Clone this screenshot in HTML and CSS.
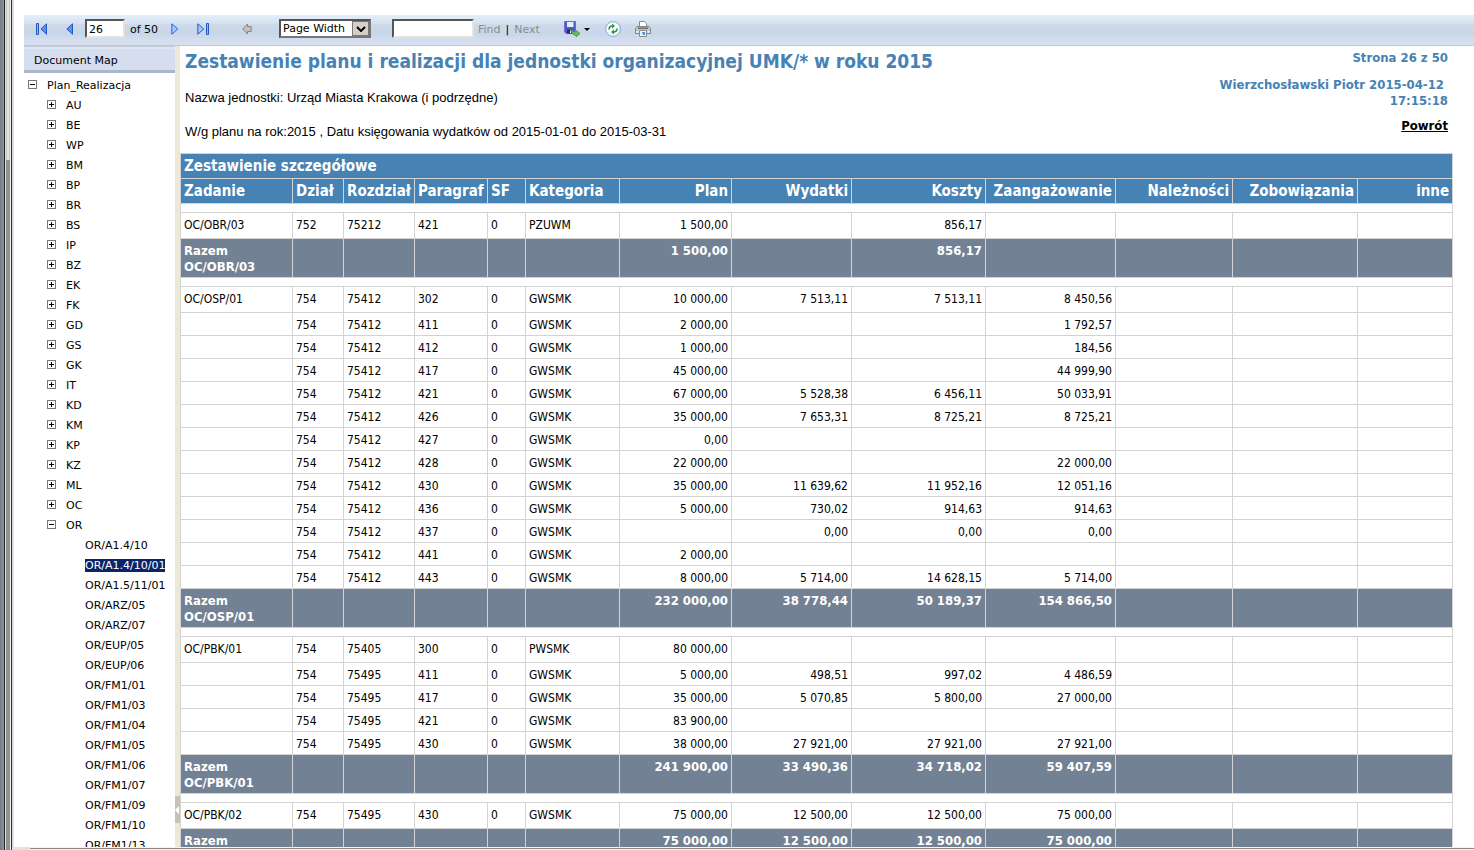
FILE: index.html
```html
<!DOCTYPE html>
<html lang="pl">
<head>
<meta charset="utf-8">
<title>Zestawienie planu i realizacji</title>
<link rel="stylesheet" href="styles.css">
</head>
<body>
<div class="frame"></div>
<div class="window">
<div class="viewer">
<div class="toolbar">
<button class="tool first" aria-label="First page"><svg width="12" height="12" viewBox="0 0 12 12"><path d="M.5.5h2v11h-2z" fill="#8db5f5" stroke="#2459c9"/><path d="M10.500.8v10.400L5 6z" fill="#5d91ef" stroke="#2459c9"/></svg></button>
<button class="tool prev" aria-label="Previous page"><svg width="7" height="12" viewBox="0 0 7 12"><path d="M6.500.8v10.400L.8 6z" fill="#5d91ef" stroke="#2459c9"/></svg></button>
<input class="page-number" type="text" value="26" aria-label="Current page">
<span class="page-total">of 50</span>
<button class="tool next" aria-label="Next page"><svg width="8" height="12" viewBox="0 0 8 12"><path d="M.8.8v10.400L6.800 6z" fill="#a4c6fb" stroke="#2868dc"/></svg></button>
<button class="tool last" aria-label="Last page"><svg width="12" height="12" viewBox="0 0 12 12"><path d="M9.500.5h2v11h-2z" fill="#8db5f5" stroke="#2459c9"/><path d="M.8.8v10.400L6.800 6z" fill="#a4c6fb" stroke="#2459c9"/></svg></button>
<button class="tool back" aria-label="Back to parent report"><svg width="10" height="12" viewBox="0 0 10 12"><path d="M.8 6 5.500 1v2.500h3.700v5H5.500V11z" fill="#c2c2c2" stroke="#858585"/></svg></button>
<div class="zoom"><select aria-label="Zoom"><option>Page Width</option></select><span class="zoom-arrow"><svg width="10" height="6" viewBox="0 0 10 6"><path d="M1 1l4 4 4-4" fill="none" stroke="#000" stroke-width="2"/></svg></span></div>
<input class="search" type="text" aria-label="Find text">
<button class="find">Find</button><span class="bar">|</span><button class="find">Next</button>
<button class="tool save" aria-label="Export"><svg width="26" height="16" viewBox="0 0 26 16"><path d="M.5.5h11v12H2l-1.500-1.500z" fill="#5058d0" stroke="#6a6fd8"/><path d="M3 1h6.500v5H3z" fill="#e8edfc"/><path d="M3 8.500h5v4H3z" fill="#26267c"/><path d="M6 9.500h1V12H6z" fill="#fff"/><path d="M6.500 7.500c1.500 3 3 3.200 4.500 3.200V8.500l5 4-3.800 3.200-.6-1.700c-3 0-4.600-2.500-5.100-6.500z" fill="#66bb58" stroke="#3c8f35" stroke-width=".8"/><path d="M20 7h6l-3 3z" fill="#000"/></svg></button>
<button class="tool refresh" aria-label="Refresh"><svg width="16" height="16" viewBox="0 0 16 16"><circle cx="8" cy="8" r="7.400" fill="#f4f9ff" stroke="#79a9df"/><path d="M4 8.500C4 6 5.500 5 7.500 5" fill="none" stroke="#2b9a3c" stroke-width="1.600"/><path d="M7 2.500 10 5 7 7.500z" fill="#2b9a3c"/><path d="M12 7.500C12 10 10.500 11 8.500 11" fill="none" stroke="#2b9a3c" stroke-width="1.600"/><path d="M9 8.500 6 11l3 2.500z" fill="#2b9a3c"/></svg></button>
<button class="tool print" aria-label="Print"><svg width="16" height="16" viewBox="0 0 16 16"><path d="M4.500 6V.5h5l2 2V6" fill="#fff" stroke="#8a8a8a"/><path d="M2 5.500h12l1.500 2v5H.5v-5z" fill="#c4c4c4" stroke="#868686"/><path d="M3 6.500h10V8H3z" fill="#6c6c6c"/><path d="M1.500 10h2v2h-2zM12.500 10h2v2h-2z" fill="#f2f2f2"/><path d="M4.500 9.500h7v6h-7z" fill="#eaf4ff" stroke="#8a8a8a"/><path d="M7 11h3v3H8z" fill="#4f92d3"/></svg></button>
</div>
<div class="panes">
<nav class="map">
<h2 class="map-title">Document Map</h2>
<ul class="tree">
<li><button class="node" aria-label="Collapse"></button>Plan_Realizacja
<ul>
<li><button class="node plus" aria-label="Expand"></button>AU</li>
<li><button class="node plus" aria-label="Expand"></button>BE</li>
<li><button class="node plus" aria-label="Expand"></button>WP</li>
<li><button class="node plus" aria-label="Expand"></button>BM</li>
<li><button class="node plus" aria-label="Expand"></button>BP</li>
<li><button class="node plus" aria-label="Expand"></button>BR</li>
<li><button class="node plus" aria-label="Expand"></button>BS</li>
<li><button class="node plus" aria-label="Expand"></button>IP</li>
<li><button class="node plus" aria-label="Expand"></button>BZ</li>
<li><button class="node plus" aria-label="Expand"></button>EK</li>
<li><button class="node plus" aria-label="Expand"></button>FK</li>
<li><button class="node plus" aria-label="Expand"></button>GD</li>
<li><button class="node plus" aria-label="Expand"></button>GS</li>
<li><button class="node plus" aria-label="Expand"></button>GK</li>
<li><button class="node plus" aria-label="Expand"></button>IT</li>
<li><button class="node plus" aria-label="Expand"></button>KD</li>
<li><button class="node plus" aria-label="Expand"></button>KM</li>
<li><button class="node plus" aria-label="Expand"></button>KP</li>
<li><button class="node plus" aria-label="Expand"></button>KZ</li>
<li><button class="node plus" aria-label="Expand"></button>ML</li>
<li><button class="node plus" aria-label="Expand"></button>OC</li>
<li><button class="node" aria-label="Collapse"></button>OR
<ul class="leaves">
<li>OR/A1.4/10</li>
<li><span class="selected">OR/A1.4/10/01</span></li>
<li>OR/A1.5/11/01</li>
<li>OR/ARZ/05</li>
<li>OR/ARZ/07</li>
<li>OR/EUP/05</li>
<li>OR/EUP/06</li>
<li>OR/FM1/01</li>
<li>OR/FM1/03</li>
<li>OR/FM1/04</li>
<li>OR/FM1/05</li>
<li>OR/FM1/06</li>
<li>OR/FM1/07</li>
<li>OR/FM1/09</li>
<li>OR/FM1/10</li>
<li>OR/FM1/13</li>
</ul></li>
</ul></li>
</ul>
</nav>
<div class="splitter"><button class="grip" aria-label="Hide document map"><svg width="4" height="8" viewBox="0 0 4 8"><path d="M4 0v8L0 4z" fill="#fff"/></svg></button></div>
<main class="report">
<header class="report-head">
<div class="intro">
<h1>Zestawienie planu i realizacji dla jednostki organizacyjnej UMK/* w roku 2015</h1>
<p>Nazwa jednostki: Urząd Miasta Krakowa (i podrzędne)</p>
<p>W/g planu na rok:2015 , Datu księgowania wydatków od 2015-01-01 do 2015-03-31</p>
</div>
<div class="meta">
<p>Strona 26 z 50</p>
<p class="author">Wierzchosławski Piotr 2015-04-12&nbsp;<br>17:15:18</p>
<a href="#">Powrót</a>
</div>
</header>
<table>
<colgroup><col class="c-task"><col class="c-dep"><col class="c-chap"><col class="c-par"><col class="c-sf"><col class="c-cat"><col class="c-plan"><col class="c-exp"><col class="c-cost"><col class="c-com"><col class="c-rec"><col class="c-obl"><col class="c-other"></colgroup>
<thead>
<tr><th colspan="13">Zestawienie szczegółowe</th></tr>
<tr><th>Zadanie</th><th>Dział</th><th>Rozdział</th><th>Paragraf</th><th>SF</th><th>Kategoria</th><th>Plan</th><th>Wydatki</th><th>Koszty</th><th>Zaangażowanie</th><th>Należności</th><th>Zobowiązania</th><th>inne</th></tr>
</thead>
<tbody>
<tr class="gap"><td colspan="13"></td></tr>
<tr class="lead"><td>OC/OBR/03</td><td>752</td><td>75212</td><td>421</td><td>0</td><td>PZUWM</td><td>1 500,00</td><td></td><td>856,17</td><td></td><td></td><td></td><td></td></tr>
<tr class="sum"><td>Razem OC/OBR/03</td><td></td><td></td><td></td><td></td><td></td><td>1 500,00</td><td></td><td>856,17</td><td></td><td></td><td></td><td></td></tr>
</tbody>
<tbody>
<tr class="gap"><td colspan="13"></td></tr>
<tr class="lead"><td>OC/OSP/01</td><td>754</td><td>75412</td><td>302</td><td>0</td><td>GWSMK</td><td>10 000,00</td><td>7 513,11</td><td>7 513,11</td><td>8 450,56</td><td></td><td></td><td></td></tr>
<tr><td></td><td>754</td><td>75412</td><td>411</td><td>0</td><td>GWSMK</td><td>2 000,00</td><td></td><td></td><td>1 792,57</td><td></td><td></td><td></td></tr>
<tr><td></td><td>754</td><td>75412</td><td>412</td><td>0</td><td>GWSMK</td><td>1 000,00</td><td></td><td></td><td>184,56</td><td></td><td></td><td></td></tr>
<tr><td></td><td>754</td><td>75412</td><td>417</td><td>0</td><td>GWSMK</td><td>45 000,00</td><td></td><td></td><td>44 999,90</td><td></td><td></td><td></td></tr>
<tr><td></td><td>754</td><td>75412</td><td>421</td><td>0</td><td>GWSMK</td><td>67 000,00</td><td>5 528,38</td><td>6 456,11</td><td>50 033,91</td><td></td><td></td><td></td></tr>
<tr><td></td><td>754</td><td>75412</td><td>426</td><td>0</td><td>GWSMK</td><td>35 000,00</td><td>7 653,31</td><td>8 725,21</td><td>8 725,21</td><td></td><td></td><td></td></tr>
<tr><td></td><td>754</td><td>75412</td><td>427</td><td>0</td><td>GWSMK</td><td>0,00</td><td></td><td></td><td></td><td></td><td></td><td></td></tr>
<tr><td></td><td>754</td><td>75412</td><td>428</td><td>0</td><td>GWSMK</td><td>22 000,00</td><td></td><td></td><td>22 000,00</td><td></td><td></td><td></td></tr>
<tr><td></td><td>754</td><td>75412</td><td>430</td><td>0</td><td>GWSMK</td><td>35 000,00</td><td>11 639,62</td><td>11 952,16</td><td>12 051,16</td><td></td><td></td><td></td></tr>
<tr><td></td><td>754</td><td>75412</td><td>436</td><td>0</td><td>GWSMK</td><td>5 000,00</td><td>730,02</td><td>914,63</td><td>914,63</td><td></td><td></td><td></td></tr>
<tr><td></td><td>754</td><td>75412</td><td>437</td><td>0</td><td>GWSMK</td><td></td><td>0,00</td><td>0,00</td><td>0,00</td><td></td><td></td><td></td></tr>
<tr><td></td><td>754</td><td>75412</td><td>441</td><td>0</td><td>GWSMK</td><td>2 000,00</td><td></td><td></td><td></td><td></td><td></td><td></td></tr>
<tr><td></td><td>754</td><td>75412</td><td>443</td><td>0</td><td>GWSMK</td><td>8 000,00</td><td>5 714,00</td><td>14 628,15</td><td>5 714,00</td><td></td><td></td><td></td></tr>
<tr class="sum"><td>Razem OC/OSP/01</td><td></td><td></td><td></td><td></td><td></td><td>232 000,00</td><td>38 778,44</td><td>50 189,37</td><td>154 866,50</td><td></td><td></td><td></td></tr>
</tbody>
<tbody>
<tr class="gap"><td colspan="13"></td></tr>
<tr class="lead"><td>OC/PBK/01</td><td>754</td><td>75405</td><td>300</td><td>0</td><td>PWSMK</td><td>80 000,00</td><td></td><td></td><td></td><td></td><td></td><td></td></tr>
<tr><td></td><td>754</td><td>75495</td><td>411</td><td>0</td><td>GWSMK</td><td>5 000,00</td><td>498,51</td><td>997,02</td><td>4 486,59</td><td></td><td></td><td></td></tr>
<tr><td></td><td>754</td><td>75495</td><td>417</td><td>0</td><td>GWSMK</td><td>35 000,00</td><td>5 070,85</td><td>5 800,00</td><td>27 000,00</td><td></td><td></td><td></td></tr>
<tr><td></td><td>754</td><td>75495</td><td>421</td><td>0</td><td>GWSMK</td><td>83 900,00</td><td></td><td></td><td></td><td></td><td></td><td></td></tr>
<tr><td></td><td>754</td><td>75495</td><td>430</td><td>0</td><td>GWSMK</td><td>38 000,00</td><td>27 921,00</td><td>27 921,00</td><td>27 921,00</td><td></td><td></td><td></td></tr>
<tr class="sum"><td>Razem OC/PBK/01</td><td></td><td></td><td></td><td></td><td></td><td>241 900,00</td><td>33 490,36</td><td>34 718,02</td><td>59 407,59</td><td></td><td></td><td></td></tr>
</tbody>
<tbody>
<tr class="gap"><td colspan="13"></td></tr>
<tr class="lead"><td>OC/PBK/02</td><td>754</td><td>75495</td><td>430</td><td>0</td><td>GWSMK</td><td>75 000,00</td><td>12 500,00</td><td>12 500,00</td><td>75 000,00</td><td></td><td></td><td></td></tr>
<tr class="sum"><td>Razem</td><td></td><td></td><td></td><td></td><td></td><td>75 000,00</td><td>12 500,00</td><td>12 500,00</td><td>75 000,00</td><td></td><td></td><td></td></tr>
</tbody>
</table>
</main>
</div>
</div>
<div class="window-edge"></div>
</div>
</body>
</html>
```
FILE: styles.css
```css
* { box-sizing: border-box; }
body {
  margin: 0;
  height: 100vh;
  overflow: hidden;
  display: flex;
  background: #fff;
  color: #000;
  font-family: "DejaVu Sans", Verdana, sans-serif;
  font-size: 11px;
}
h1, h2, p, ul { margin: 0; padding: 0; }
button { border: 0; padding: 0; background: none; font: inherit; color: inherit; }
svg { display: block; }

.frame {
  flex: none;
  width: 14px;
  margin-right: -2px;
  background:
    linear-gradient(90deg, transparent 6px, #b4b4b4 6px, #f0f0f0 8px, #b8b8b8 10px, transparent 10px) 0 0 / 14px 160px no-repeat,
    linear-gradient(90deg, #747b84 0, #8e949c 4px, #222 4px, #222 5px, #ddd 5px, #ddd 6px, #929292 6px, #929292 10px, #eee 10px, #eee 11px, #333 11px, #333 12px, #ccc 12px, #eee 14px);
}
.window { flex: 1; min-width: 0; display: flex; flex-direction: column; }
.window-edge {
  flex: none;
  height: 3px;
  background:
    linear-gradient(90deg, #e2e2e2 18px, transparent 18px),
    linear-gradient(#f4f4f4 1px, #8a8a8a 1px, #8a8a8a 2px, #f4f4f4 2px);
}
.viewer { flex: 1; min-height: 0; display: flex; flex-direction: column; padding: 15px 0 0 12px; }

.toolbar {
  flex: none;
  height: 31px;
  display: flex;
  align-items: center;
  padding: 0 12px 3px;
  border-bottom: 1px solid #c8c8c8;
  background: linear-gradient(#e4eefa, #d8e3f1 8px, #ccd9ea 10px, #c8d6e9 19px, #d2ddee 24px, #d6e0f0);
}
.tool { flex: none; }
.prev { margin-left: 18px; }
.page-number, .search {
  height: 19px;
  border: 2px solid;
  border-color: #555 #e6e3dc #e6e3dc #555;
  background: #fff;
  font: inherit;
  padding: 1px 2px 0;
}
.page-number { width: 40px; margin-left: 12px; }
.page-total { width: 41px; padding: 2px 0 0 5px; }
.next { margin-left: 5px; }
.last { margin-left: 18px; }
.back { margin-left: 33px; }
.zoom { display: grid; width: 92px; height: 19px; margin-left: 27px; border: 2px solid; border-color: #555 #777 #777 #555; background: #fff; }
.zoom select, .zoom-arrow { grid-area: 1 / 1; }
.zoom select { appearance: none; border: 0; padding: 0 0 0 2px; background: none; font: inherit; color: #000; }
.zoom-arrow { justify-self: end; width: 17px; display: grid; place-items: center; background: #d4d0c8; border: 1px solid #777; pointer-events: none; }
.search { width: 82px; margin: 0 4px 0 21px; }
.find { color: #8a8d91; padding-top: 2px; }
.bar { padding: 2px 5px 0; }
.save { margin-left: 24px; }
.refresh { margin-left: 15px; }
.print { margin-left: 14px; }

.panes { flex: 1; min-height: 0; display: flex; }
.map { flex: none; width: 151px; overflow: hidden; padding-top: 3px; background: linear-gradient(#c3cad5 1px, #dce6f3 1px, #dce6f3 3px, #fff 3px); }
.map-title {
  height: 24px;
  padding: 1px 0 0 10px;
  line-height: 22px;
  font-size: 11px;
  font-weight: normal;
  background: #d4deef;
  border-bottom: 3px solid #aab7c9;
}
.tree { padding: 3px 0 0 4px; }
.tree ul { padding-left: 19px; }
.tree .leaves { padding-left: 38px; }
.tree li { list-style: none; line-height: 20px; white-space: nowrap; }
.node {
  width: 9px;
  height: 9px;
  margin-right: 10px;
  vertical-align: 1px;
  border: 1px solid #777;
  background: linear-gradient(#000, #000) 50% 50% / 5px 1px no-repeat #fff;
}
.plus { background: linear-gradient(#000, #000) 50% 50% / 5px 1px no-repeat, linear-gradient(#000, #000) 50% 50% / 1px 5px no-repeat #fff; }
.selected { background: #0a246a; color: #fff; }

.splitter { flex: none; width: 5px; display: flex; flex-direction: column; justify-content: flex-end; padding-bottom: 24px; background: #ece9d8; }
.grip { height: 27px; display: grid; place-items: center start; background: #c5c2b8; }

.report { flex: 1; min-width: 0; overflow: hidden; padding-right: 21px; font-family: "DejaVu Sans Condensed", Tahoma, sans-serif; }
.report-head { display: flex; justify-content: space-between; height: 107px; padding: 4px 5px 0; }
.intro { font: 13px/16px "Liberation Sans", Arial, sans-serif; }
.intro h1 { font: bold 19px/22px "DejaVu Sans Condensed", Tahoma, sans-serif; color: #4682b4; margin-bottom: 18px; }
.intro p { margin-bottom: 18px; }
.meta { text-align: right; font-weight: bold; font-size: 13px; line-height: 16px; color: #4682b4; }
.meta p { margin-bottom: 11px; }
.meta .author { margin-bottom: 9px; }
.meta a { color: #000; }

table { width: 100%; table-layout: fixed; border-collapse: collapse; font-size: 12px; line-height: 16px; }
.c-task, .c-plan { width: 112px; }
.c-dep { width: 51px; }
.c-chap { width: 71px; }
.c-par { width: 73px; }
.c-sf { width: 38px; }
.c-cat { width: 94px; }
.c-exp { width: 120px; }
.c-cost { width: 134px; }
.c-com { width: 130px; }
.c-rec { width: 117px; }
.c-obl { width: 125px; }
.c-other { width: 95px; }
th, td { height: 23px; border: 1px solid #d3d3d3; padding: 4px 3px 0; text-align: left; vertical-align: top; }
th { height: 25px; background: #4682b4; color: #fff; font-size: 15px; white-space: nowrap; }
th:nth-child(n+7), td:nth-child(n+7) { text-align: right; white-space: nowrap; }
.lead td { height: 26px; }
.gap td { height: 9px; padding: 0; }
.sum td { height: 39px; background: #738194; color: #fff; font-size: 13px; font-weight: bold; }
```
